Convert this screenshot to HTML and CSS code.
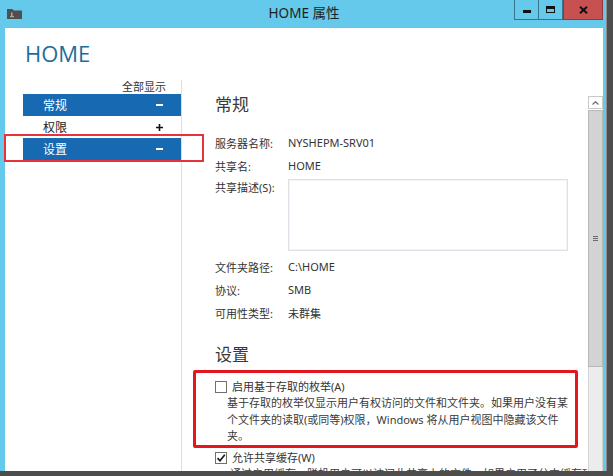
FILE: index.html
```html
<!DOCTYPE html>
<html lang="zh-CN">
<head>
<meta charset="utf-8">
<title>HOME 属性</title>
<link rel="stylesheet" href="styles.css">
</head>
<body>
<div class="window">
  <div class="titlebar">
    <div class="tb-left">
      <svg class="app-icon" width="15" height="11" viewBox="0 0 15 11"><path d="M0 1h5.5l1.2 1.5H15V11H0z" fill="#4f4f4f"/><rect x="4" y="4.5" width="1.5" height="4.5" fill="#a8a8a8"/><rect x="3" y="8" width="4" height="1.2" fill="#a8a8a8"/></svg>
    </div>
    <div class="tb-title">HOME 属性</div>
    <div class="tb-right">
      <div class="tb-btn min"><span class="min-glyph"></span></div>
      <div class="tb-btn max"><span class="max-glyph"></span></div>
      <div class="tb-btn close"><svg width="9" height="8" viewBox="0 0 9 8"><path d="M1 0.8L8 7.2M8 0.8L1 7.2" stroke="#111" stroke-width="2"/></svg></div>
    </div>
  </div>
  <div class="client">
    <div class="header">HOME</div>
    <div class="main">
      <div class="nav">
        <div class="nav-all">全部显示</div>
        <div class="nav-item active"><span>常规</span><span class="minus"></span></div>
        <div class="nav-item"><span>权限</span><svg class="plus" width="7" height="7" viewBox="0 0 7 7"><path d="M3.5 0v7M0 3.5h7" stroke="#111" stroke-width="1.6"/></svg></div>
        <div class="nav-item active"><span>设置</span><span class="minus"></span></div>
      </div>
      <div class="content">
        <div class="section-title">常规</div>
        <div class="rows">
          <div class="row"><span class="lbl">服务器名称:</span><span class="val">NYSHEPM-SRV01</span></div>
          <div class="row"><span class="lbl">共享名:</span><span class="val">HOME</span></div>
          <div class="row row-desc"><span class="lbl">共享描述(S):</span><div class="textbox"></div></div>
          <div class="row row-after"><span class="lbl">文件夹路径:</span><span class="val">C:\HOME</span></div>
          <div class="row"><span class="lbl">协议:</span><span class="val">SMB</span></div>
          <div class="row"><span class="lbl">可用性类型:</span><span class="val">未群集</span></div>
        </div>
        <div class="section-title settings-title">设置</div>
        <div class="highlight">
          <div class="check-row"><span class="checkbox"></span><span>启用基于存取的枚举(A)</span></div>
          <div class="desc">基于存取的枚举仅显示用户有权访问的文件和文件夹。如果用户没有某<br>个文件夹的读取(或同等)权限，Windows 将从用户视图中隐藏该文件<br>夹。</div>
        </div>
        <div class="check-row check-row-2"><span class="checkbox checked"><svg width="10" height="10" viewBox="0 0 10 10"><path d="M1.5 5.2L4 7.8L8.8 1.8" stroke="#1a1a1a" stroke-width="1.7" fill="none"/></svg></span><span>允许共享缓存(W)</span></div>
        <div class="desc desc-cut">通过启用缓存，脱机用户可以访问此共享上的文件。如果启用了分支缓存功能，</div>
      </div>
      <div class="scrollbar">
        <div class="sb-up"><svg width="7" height="4" viewBox="0 0 7 4"><polyline points="0.5,3.5 3.5,0.7 6.5,3.5" stroke="#6f6f6f" stroke-width="1.2" fill="none"/></svg></div>
        <div class="sb-thumb"><span class="grip"></span><span class="grip"></span><span class="grip"></span></div>
        <div class="sb-track"></div>
      </div>
    </div>
  </div>
  <div class="annot"></div>
</div>
</body>
</html>
```

FILE: styles.css
```css
html, body {
  margin: 0;
  padding: 0;
  background: #4d4d4d;
}
body {
  width: 613px;
  height: 476px;
  overflow: hidden;
  font-family: "Noto Sans", "Noto Sans CJK SC", sans-serif;
  color: #333;
}
.window {
  position: relative;
  width: 607px;
  height: 471px;
  box-sizing: border-box;
  padding: 0 3px 0 5px;
  background: #64c9ea;
  display: flex;
  flex-direction: column;
  border-right: 1px solid #8d8d8d;
  overflow: hidden;
}
.titlebar {
  height: 28px;
  flex: none;
  display: grid;
  grid-template-columns: 1fr auto 1fr;
}
.tb-left {
  padding: 8px 0 0 2px;
}
.app-icon { display: block; }
.tb-title {
  font-size: 13.5px;
  line-height: 28px;
  color: #1e1e1e;
  margin-top: -1px;
}
.tb-right {
  display: flex;
  justify-content: flex-end;
  align-items: flex-start;
}
.tb-btn {
  height: 20px;
  box-sizing: border-box;
  display: flex;
  align-items: center;
  justify-content: center;
  border: 1px solid #36758c;
  border-top: none;
}
.min { width: 25px; }
.max { width: 24px; border-left: none; }
.close { width: 40px; background: #c75050; border: 1px solid #8f3a3a; border-top: none; }
.min-glyph {
  width: 8px;
  height: 3px;
  background: #111;
  margin-top: 4px;
}
.max-glyph {
  width: 9px;
  height: 7px;
  box-sizing: border-box;
  border: 1.5px solid #111;
  border-top-width: 3px;
}
.client {
  flex: 1;
  background: #fff;
  display: flex;
  flex-direction: column;
  overflow: hidden;
  min-height: 0;
}
.header {
  padding: 12px 0 0 20px;
  font-family: "Open Sans", "Noto Sans", sans-serif;
  font-weight: 400;
  font-size: 22px;
  line-height: 26px;
  color: #1d6d9b;
  height: 26px;
}
.main {
  flex: 1;
  display: flex;
  margin-top: 12px;
  min-height: 0;
}
.nav {
  width: 177px;
  flex: none;
  box-sizing: border-box;
  padding-left: 18px;
  border-right: 1px solid #dedede;
  margin-top: 2px;
}
.nav-all {
  height: 14px;
  line-height: 14px;
  font-size: 11px;
  text-align: right;
  padding-right: 15px;
  color: #333;
}
.nav-item {
  height: 22px;
  display: flex;
  align-items: center;
  justify-content: space-between;
  padding: 0 18px 0 20px;
  font-size: 12px;
  color: #222;
}
.nav-item.active {
  background: #1769b2;
  color: #fff;
}
.minus {
  width: 7px;
  height: 2px;
  background: #fff;
}
.plus { display: block; }
.content {
  flex: 1;
  padding: 15px 0 0 33px;
  overflow: hidden;
  font-size: 11px;
  color: #333;
}
.section-title {
  font-size: 17px;
  line-height: 24px;
  color: #3a3a3a;
}
.rows { margin-top: 14px; }
.row {
  display: flex;
  align-items: center;
  height: 23px;
}
.lbl { width: 73px; flex: none; }
.row-desc {
  height: auto;
  align-items: flex-start;
  margin-top: 2px;
  line-height: 18px;
}
.textbox {
  width: 280px;
  height: 72px;
  box-sizing: border-box;
  border: 1px solid #dfdfe7;
  box-shadow: inset 0 0 0 1px #f3f3f6;
}
.row-after { margin-top: 4px; }
.settings-title { margin-top: 19px; }
.highlight {
  margin: 3px 0 0 -22px;
  width: 385px;
  box-sizing: border-box;
  border: 3px solid #e5161d;
  border-radius: 2px;
  padding: 6px 0 0.5px 19px;
}
.check-row {
  display: flex;
  align-items: center;
  gap: 5px;
  height: 16px;
  line-height: 16px;
}
.checkbox {
  width: 12px;
  height: 12px;
  box-sizing: border-box;
  border: 1px solid #707070;
  background: #fff;
  display: flex;
  align-items: center;
  justify-content: center;
  flex: none;
}
.desc {
  padding-left: 12px;
  line-height: 16.5px;
  color: #3a3a3a;
  white-space: nowrap;
}
.check-row-2 { margin-top: 2px; }
.desc-cut { padding-left: 15px; }
.scrollbar {
  width: 15px;
  flex: none;
  margin-top: 18px;
  display: flex;
  flex-direction: column;
}
.sb-up {
  height: 13px;
  box-sizing: border-box;
  border: 1px solid #c8c8c8;
  background: #fff;
  display: flex;
  align-items: center;
  justify-content: center;
}
.sb-thumb {
  height: 257px;
  margin-top: 1px;
  box-sizing: border-box;
  background: #d3d3d3;
  border: 1px solid #b8b8b8;
  display: flex;
  flex-direction: column;
  align-items: center;
  justify-content: center;
  gap: 1px;
}
.grip {
  width: 5px;
  height: 1px;
  background: #6a6a6a;
}
.sb-track {
  flex: 1;
  background: #ececec;
  border-left: 1px solid #d4d4d4;
  border-right: 1px solid #d4d4d4;
}
.annot {
  position: absolute;
  left: 4px;
  top: 134px;
  width: 200px;
  height: 28px;
  box-sizing: border-box;
  border: 2px solid #e8323a;
}
```
